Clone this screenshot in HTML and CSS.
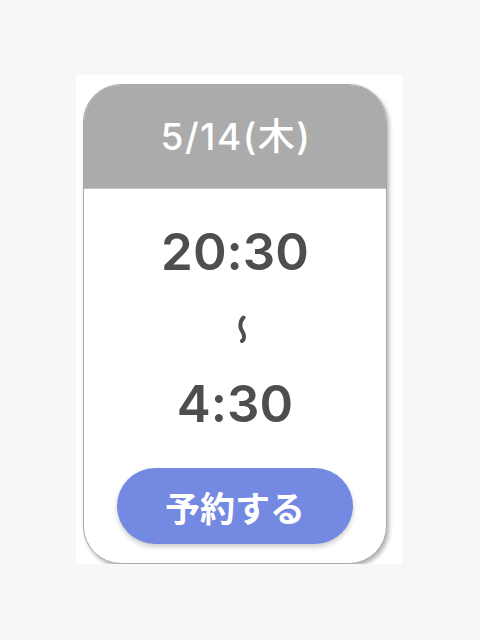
FILE: index.html
```html
<!DOCTYPE html>
<html lang="ja">
<head>
    <meta charset="UTF-8">
    <meta name="viewport" content="width=device-width, initial-scale=1.0">
    <title>予約</title>
    <link rel="stylesheet" href="styles.css">
</head>
<body>

<div class="frame">
    <div class="card">
        <div class="card-header">5/14(木)</div>
        <div class="card-body">
            <div class="time">20:30</div>
            <svg class="wave" width="10" height="28" viewBox="0 0 10 28">
                <path d="M6.5 2.5 C4 5, 3 8, 3.5 12 S 7.5 18, 7 22 S 5.5 25.5, 5 26" fill="none" stroke="#4f4f4f" stroke-width="4" stroke-linecap="round"/>
            </svg>
            <div class="time">4:30</div>
            <button class="reserve-btn">予約する</button>
        </div>
    </div>
</div>

</body>
</html>
```

FILE: styles.css
```css
body {
    margin: 0;
    background-color: #f7f7f7;
    font-family: Inter, "Noto Sans CJK JP", sans-serif;
    font-feature-settings: "calt" 0;
}
.frame {
    margin: 75px 0 0 76px;
    width: 326px;
    height: 489px;
    background-color: #ffffff;
    padding: 9px 0 0 7px;
    box-sizing: border-box;
}
.card {
    width: 304px;
    height: 480px;
    box-sizing: border-box;
    border: 1px solid #a9a9a9;
    border-radius: 38px;
    overflow: hidden;
    background-color: #ffffff;
    box-shadow: 2px 3px 4px rgba(0, 0, 0, 0.3);
    display: flex;
    flex-direction: column;
}
.card-header {
    height: 103px;
    flex-shrink: 0;
    background-color: #ababab;
    border-bottom: 1px solid #c4c4c4;
    color: #ffffff;
    font-size: 37px;
    font-weight: 500;
    letter-spacing: 1.5px;
    line-height: 1;
    display: flex;
    align-items: center;
    justify-content: center;
    padding-left: 2px;
}
.card-body {
    flex: 1;
    display: flex;
    flex-direction: column;
    align-items: center;
    padding-top: 37px;
}
.time {
    font-size: 51px;
    font-weight: 600;
    color: #4e4e4e;
    line-height: 51px;
}
.wave {
    display: block;
    margin: 38px 0 35px 14px;
}
.reserve-btn {
    margin-top: 39px;
    width: 236px;
    height: 76px;
    border: none;
    border-radius: 38px;
    background-color: #7489e1;
    color: #ffffff;
    font-family: "Noto Sans CJK JP", sans-serif;
    font-size: 35px;
    font-weight: 700;
    box-shadow: 0 3px 5px rgba(0, 0, 0, 0.2);
}
```
